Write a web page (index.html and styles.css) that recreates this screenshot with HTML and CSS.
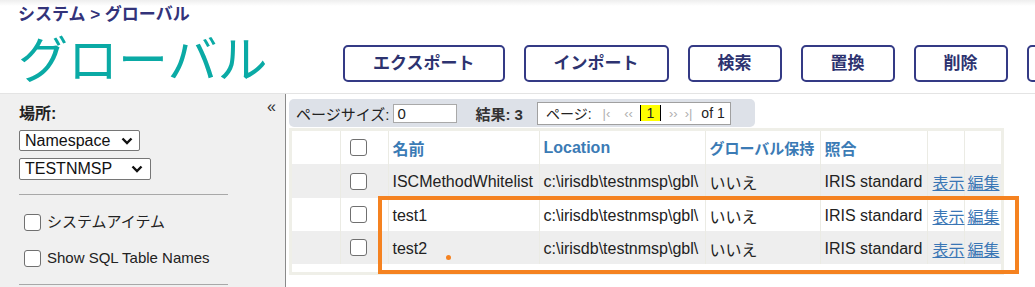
FILE: index.html
```html
<!DOCTYPE html>
<html lang="ja">
<head>
<meta charset="utf-8">
<title>グローバル</title>
<link rel="stylesheet" href="styles.css">
</head>
<body>
<header class="hdr">
  <div class="crumb">システム &gt; グローバル</div>
  <div class="hdr-row">
    <h1 class="title">グローバル</h1>
    <nav class="actions">
      <button class="btn">エクスポート</button>
      <button class="btn">インポート</button>
      <button class="btn">検索</button>
      <button class="btn">置換</button>
      <button class="btn">削除</button>
      <button class="btn btn-more" aria-label="ジャーナル"></button>
    </nav>
  </div>
</header>
<div class="main">
  <aside class="side">
    <div class="side-top">
      <div class="lbl">場所:</div>
      <div class="collapse">«</div>
    </div>
    <div class="sel sel-ns"><span>Namespace</span><svg class="chev" width="12" height="8" viewBox="0 0 12 8"><polyline points="1.5,1.5 6,6 10.5,1.5" fill="none" stroke="#111" stroke-width="2.4"/></svg></div>
    <div class="sel sel-db"><span>TESTNMSP</span><svg class="chev" width="12" height="8" viewBox="0 0 12 8"><polyline points="1.5,1.5 6,6 10.5,1.5" fill="none" stroke="#111" stroke-width="2.4"/></svg></div>
    <hr class="rule">
    <label class="chk"><span class="box"></span>システムアイテム</label>
    <label class="chk chk2"><span class="box"></span>Show SQL Table Names</label>
    <hr class="rule rule2">
  </aside>
  <section class="content">
    <div class="toolbar">
      <span class="tb-txt">ページサイズ:</span>
      <span class="tb-input">0</span>
      <span class="tb-count">結果: 3</span>
      <div class="pager">
        <span class="pg-lbl">ページ:</span>
        <span class="pg-nav pg-first">|‹</span>
        <span class="pg-nav pg-prev">‹‹</span>
        <span class="pg-cur">1</span>
        <span class="pg-nav pg-next">››</span>
        <span class="pg-nav pg-last">›|</span>
        <span class="pg-of">of 1</span>
      </div>
    </div>
    <div class="grid">
      <table class="tbl">
        <colgroup>
          <col class="c-idx"><col class="c-chk"><col class="c-name"><col class="c-loc"><col class="c-keep"><col class="c-coll"><col class="c-lnk"><col class="c-lnk">
        </colgroup>
        <thead>
          <tr><th></th><th class="td-chk"><span class="box"></span></th><th>名前</th><th>Location</th><th class="th-keep">グローバル保持</th><th>照合</th><th></th><th></th></tr>
        </thead>
        <tbody>
          <tr class="odd"><td></td><td class="td-chk"><span class="box"></span></td><td>ISCMethodWhitelist</td><td>c:\irisdb\testnmsp\gbl\</td><td>いいえ</td><td>IRIS standard</td><td class="lk"><a href="#">表示</a></td><td class="lk lk2"><a href="#">編集</a></td></tr>
          <tr><td></td><td class="td-chk"><span class="box"></span></td><td>test1</td><td>c:\irisdb\testnmsp\gbl\</td><td>いいえ</td><td>IRIS standard</td><td class="lk"><a href="#">表示</a></td><td class="lk lk2"><a href="#">編集</a></td></tr>
          <tr class="odd"><td></td><td class="td-chk"><span class="box"></span></td><td>test2</td><td>c:\irisdb\testnmsp\gbl\</td><td>いいえ</td><td>IRIS standard</td><td class="lk"><a href="#">表示</a></td><td class="lk lk2"><a href="#">編集</a></td></tr>
        </tbody>
      </table>
    </div>
  </section>
</div>
<div class="mark"></div>
<div class="dot"></div>
</body>
</html>
```
FILE: styles.css
```css
* { box-sizing: border-box; }
html, body { margin: 0; padding: 0; }
body {
  font-family: "Liberation Sans", "Noto Sans CJK JP", sans-serif;
  color: #222;
  background: #fff;
  width: 1035px;
  height: 287px;
  overflow: hidden;
  position: relative;
}
.hdr {
  height: 94px;
  padding-left: 18px;
  border-bottom: 1px solid #e4e4e4;
  background: linear-gradient(#eeeeee 0, #ffffff 6px);
  overflow: hidden;
}
.crumb {
  font-size: 17px;
  font-weight: bold;
  color: #33337a;
  line-height: 24px;
  padding-top: 3px;
}
.hdr-row {
  display: flex;
  align-items: flex-start;
  margin-top: 4px;
  white-space: nowrap;
}
.title {
  flex: 0 0 325px;
  margin: 0;
  font-size: 50px;
  font-weight: normal;
  line-height: 60px;
  color: #0aaaa5;
}
.actions {
  display: flex;
  gap: 19px;
  margin-top: 14px;
}
.btn {
  flex: none;
  height: 37px;
  padding: 0 28px;
  border: 2px solid #343a85;
  border-radius: 5px;
  background: #fff;
  color: #2d3370;
  font-family: "Liberation Sans", "Noto Sans CJK JP", sans-serif;
  font-size: 17px;
  font-weight: bold;
  line-height: 1;
}
.btn-more { width: 92px; }
.main {
  display: flex;
  height: 193px;
}
.side {
  flex: 0 0 286px;
  background: #f0f0f0;
  border-right: 1px solid #8a8a8a;
  padding: 10px 9px 0 19px;
}
.side-top {
  display: flex;
  justify-content: space-between;
  align-items: flex-start;
}
.lbl {
  font-size: 16px;
  font-weight: bold;
  line-height: 20px;
}
.collapse {
  font-size: 16px;
  line-height: 14px;
  margin-top: -4px;
  color: #333;
}
.sel {
  display: flex;
  align-items: center;
  justify-content: space-between;
  background: #fff;
  border: 1px solid #767676;
  border-radius: 2px;
  font-size: 16px;
  padding: 0 6px 0 5px;
  color: #111;
}
.sel-ns { width: 121px; height: 21px; margin-top: 6px; }
.sel-db { width: 132px; height: 22px; margin-top: 7px; padding-right: 7px; }
.rule {
  width: 209px;
  margin: 14px 0 0 0;
  border: 0;
  border-top: 1px solid #a8a8a8;
  height: 0;
}
.rule2 { margin-top: 16px; }
.chk {
  display: flex;
  align-items: center;
  font-size: 15px;
  line-height: 20px;
  margin-top: 17px;
  padding-left: 5px;
  color: #222;
}
.chk2 { margin-top: 16px; }
.chk .box { margin-right: 6px; }
.box {
  display: inline-block;
  width: 17px;
  height: 17px;
  border: 1.5px solid #707070;
  border-radius: 3px;
  background: #fff;
  flex: none;
}
.content {
  flex: 1;
  padding: 5px 0 0 3px;
}
.toolbar {
  display: inline-flex;
  align-items: center;
  height: 28px;
  padding: 0 24px 0 7px;
  background: #dde1e8;
  border-radius: 5px;
  font-size: 15px;
  white-space: nowrap;
}
.tb-input {
  display: inline-block;
  width: 64px;
  height: 19px;
  margin-left: 4px;
  background: #fff;
  border: 1px solid #a9a9a9;
  font-size: 15px;
  line-height: 17px;
  padding-left: 3px;
}
.tb-count {
  margin-left: 18px;
  font-weight: bold;
  color: #333;
}
.pager {
  display: flex;
  align-items: center;
  height: 23px;
  margin-left: 14px;
  padding: 0 5px 0 8px;
  background: #fff;
  border: 1px solid #a0a0a0;
  font-size: 14px;
}
.pg-nav { color: #b0b0b0; font-size: 13px; }
.pg-first { margin-left: 11px; }
.pg-prev { margin-left: 14px; }
.pg-cur {
  margin-left: 7px;
  width: 21px;
  height: 16px;
  background: #ffff00;
  border-left: 1px solid #000;
  border-right: 1px solid #000;
  text-align: center;
  line-height: 16px;
}
.pg-next { margin-left: 8px; }
.pg-last { margin-left: 7px; }
.pg-of { margin-left: 9px; }
.grid {
  display: inline-block;
  margin-top: 1px;
  border: 3px solid #efefe8;
  padding-bottom: 8px;
  background: #fff;
}
.tbl {
  border-collapse: collapse;
  table-layout: fixed;
  width: 709px;
  font-size: 16px;
}
.c-idx { width: 48px; }
.c-chk { width: 48px; }
.c-name { width: 151px; }
.c-loc { width: 166px; }
.c-keep { width: 115px; }
.c-coll { width: 107px; }
.c-lnk { width: 37px; }
.tbl th, .tbl td {
  padding: 0 0 0 4px;
  border-right: 1px solid #ebebe4;
  text-align: left;
  white-space: nowrap;
  overflow: visible;
  vertical-align: middle;
}
.tbl td { padding-top: 2px; }
.tbl th:last-child, .tbl td:last-child { border-right: 0; }
.tbl th {
  height: 33px;
  font-weight: bold;
  color: #3b7bb5;
}
.tbl .th-keep { font-size: 15px; }
.tbl td { height: 33px; }
.tbl tbody tr:first-child td { height: 34px; }
.tbl tr.odd td { background: #eeeeee; }
.tbl .td-chk { padding-left: 9px; padding-top: 0; line-height: 0; }
.tbl .lk { padding-left: 5px; }
.tbl .lk2 { padding-left: 3px; }
.tbl a { color: #3a76b5; text-decoration: underline; }
.mark {
  position: absolute;
  left: 378px;
  top: 196px;
  width: 641px;
  height: 78px;
  border: 4px solid #f58220;
}
.dot {
  position: absolute;
  left: 446px;
  top: 255px;
  width: 5px;
  height: 5px;
  border-radius: 50%;
  background: #f58220;
}
```
